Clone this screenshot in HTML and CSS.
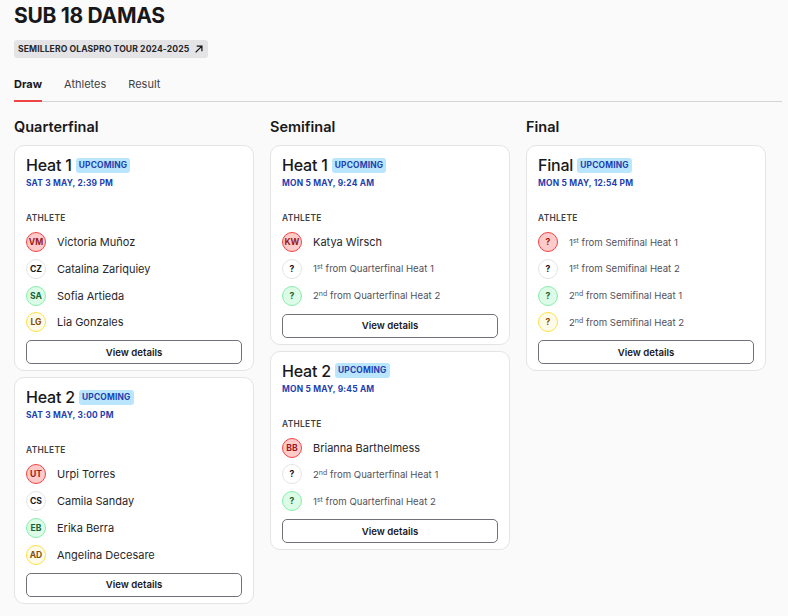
FILE: index.html
```html
<!DOCTYPE html>
<html lang="en">
<head>
<meta charset="utf-8">
<title>SUB 18 DAMAS</title>
<link rel="stylesheet" href="styles.css">
</head>
<body>
<div class="page">
  <h1 class="title">SUB 18 DAMAS</h1>
  <a class="tour">SEMILLERO OLASPRO TOUR 2024-2025
    <svg class="ext" viewBox="0 0 12 12" width="10" height="10"><path d="M2.5 9.5 L9.5 2.5 M4 2.5 H9.5 V8" fill="none" stroke="#111" stroke-width="1.5" stroke-linecap="square"/></svg>
  </a>
  <nav class="tabs">
    <span class="tab active">Draw</span>
    <span class="tab">Athletes</span>
    <span class="tab">Result</span>
  </nav>

  <div class="rounds">
    <section class="round">
      <h2 class="round-title">Quarterfinal</h2>
      <div class="card">
        <div class="head"><span class="name">Heat 1</span><span class="badge">UPCOMING</span></div>
        <div class="date">SAT 3 MAY, 2:39 PM</div>
        <div class="label">ATHLETE</div>
        <ul class="list">
          <li><span class="av red">VM</span><span class="ath">Victoria Muñoz</span></li>
          <li><span class="av white">CZ</span><span class="ath">Catalina Zariquiey</span></li>
          <li><span class="av green">SA</span><span class="ath">Sofia Artieda</span></li>
          <li><span class="av yellow">LG</span><span class="ath">Lia Gonzales</span></li>
        </ul>
        <button class="btn">View details</button>
      </div>
      <div class="card">
        <div class="head"><span class="name">Heat 2</span><span class="badge">UPCOMING</span></div>
        <div class="date">SAT 3 MAY, 3:00 PM</div>
        <div class="label">ATHLETE</div>
        <ul class="list">
          <li><span class="av red">UT</span><span class="ath">Urpi Torres</span></li>
          <li><span class="av white">CS</span><span class="ath">Camila Sanday</span></li>
          <li><span class="av green">EB</span><span class="ath">Erika Berra</span></li>
          <li><span class="av yellow">AD</span><span class="ath">Angelina Decesare</span></li>
        </ul>
        <button class="btn">View details</button>
      </div>
    </section>

    <section class="round">
      <h2 class="round-title">Semifinal</h2>
      <div class="card">
        <div class="head"><span class="name">Heat 1</span><span class="badge">UPCOMING</span></div>
        <div class="date">MON 5 MAY, 9:24 AM</div>
        <div class="label">ATHLETE</div>
        <ul class="list">
          <li><span class="av red">KW</span><span class="ath">Katya Wirsch</span></li>
          <li><span class="av white">?</span><span class="ph">1<sup>st</sup> from Quarterfinal Heat 1</span></li>
          <li><span class="av green">?</span><span class="ph">2<sup>nd</sup> from Quarterfinal Heat 2</span></li>
        </ul>
        <button class="btn">View details</button>
      </div>
      <div class="card">
        <div class="head"><span class="name">Heat 2</span><span class="badge">UPCOMING</span></div>
        <div class="date">MON 5 MAY, 9:45 AM</div>
        <div class="label">ATHLETE</div>
        <ul class="list">
          <li><span class="av red">BB</span><span class="ath">Brianna Barthelmess</span></li>
          <li><span class="av white">?</span><span class="ph">2<sup>nd</sup> from Quarterfinal Heat 1</span></li>
          <li><span class="av green">?</span><span class="ph">1<sup>st</sup> from Quarterfinal Heat 2</span></li>
        </ul>
        <button class="btn">View details</button>
      </div>
    </section>

    <section class="round">
      <h2 class="round-title">Final</h2>
      <div class="card">
        <div class="head"><span class="name">Final</span><span class="badge">UPCOMING</span></div>
        <div class="date">MON 5 MAY, 12:54 PM</div>
        <div class="label">ATHLETE</div>
        <ul class="list">
          <li><span class="av red">?</span><span class="ph">1<sup>st</sup> from Semifinal Heat 1</span></li>
          <li><span class="av white">?</span><span class="ph">1<sup>st</sup> from Semifinal Heat 2</span></li>
          <li><span class="av green">?</span><span class="ph">2<sup>nd</sup> from Semifinal Heat 1</span></li>
          <li><span class="av yellow">?</span><span class="ph">2<sup>nd</sup> from Semifinal Heat 2</span></li>
        </ul>
        <button class="btn">View details</button>
      </div>
    </section>
  </div>
</div>
</body>
</html>
```

FILE: styles.css
```css
* { box-sizing: border-box; }
html, body { margin: 0; padding: 0; background: #fafafa; }
body {
  font-family: Inter, "Noto Sans", "Liberation Sans", sans-serif;
  color: #18181b;
}
.page { width: 768px; margin-left: 14px; padding-top: 3px; }
.title {
  margin: 0;
  font-size: 21px;
  line-height: 26px;
  font-weight: 700;
  letter-spacing: -0.3px;
}
.tour {
  display: inline-flex;
  align-items: center;
  gap: 5px;
  margin-top: 11px;
  background: #e4e4e7;
  border-radius: 3px;
  padding: 0 4px;
  height: 18px;
  font-size: 8.6px;
  font-weight: 700;
  color: #27272a;
  letter-spacing: 0.1px;
}
.ext { display: block; }
.tabs {
  display: flex;
  gap: 22px;
  margin-top: 18px;
  border-bottom: 1px solid #d4d4d8;
}
.tab {
  font-size: 11px;
  line-height: 14px;
  padding: 1px 0 9px;
  color: #3f3f46;
  border-bottom: 2px solid transparent;
  margin-bottom: -1px;
}
.tab.active {
  font-weight: 700;
  color: #18181b;
  border-bottom-color: #ef4444;
}
.rounds {
  display: grid;
  grid-template-columns: repeat(3, 240px);
  column-gap: 16px;
  align-items: start;
  margin-top: 16px;
}
.round-title {
  margin: 0 0 9px;
  font-size: 14.5px;
  line-height: 18px;
  font-weight: 600;
}
.card {
  background: #fff;
  border: 1px solid #e4e4e7;
  border-radius: 10px;
  padding: 9px 11px 6px;
  margin-bottom: 6px;
}
.head { display: flex; align-items: center; gap: 4px; height: 20px; }
.name { font-size: 16px; font-weight: 500; letter-spacing: -0.2px; }
.badge {
  background: #bae6fd;
  color: #1e40af;
  font-size: 8.4px;
  font-weight: 700;
  border-radius: 3px;
  padding: 0 3px;
  height: 15px;
  line-height: 15px;
  letter-spacing: 0.2px;
}
.date {
  margin-top: 2px;
  font-size: 8.4px;
  line-height: 13px;
  font-weight: 700;
  color: #1e40af;
  letter-spacing: 0.2px;
}
.label {
  margin-top: 22px;
  font-size: 8.4px;
  line-height: 12px;
  font-weight: 600;
  color: #3f3f46;
  letter-spacing: 0.3px;
}
.list {
  list-style: none;
  margin: 8px 0 0;
  padding: 0;
  display: flex;
  flex-direction: column;
  gap: 6.8px;
}
.list li { display: flex; align-items: center; gap: 11px; height: 20px; }
.av {
  flex: none;
  width: 20px;
  height: 20px;
  border-radius: 50%;
  display: flex;
  align-items: center;
  justify-content: center;
  font-size: 8.6px;
  font-weight: 700;
  border: 1px solid;
}
.av.red { background: #fecaca; border-color: #ef4444; color: #991b1b; }
.av.white { background: #fff; border-color: #e4e4e7; color: #18181b; }
.av.green { background: #dcfce7; border-color: #86efac; color: #166534; }
.av.yellow { background: #fefce8; border-color: #fde047; color: #854d0e; }
.ath { font-size: 11px; color: #27272a; }
.ph { font-size: 9.6px; color: #52525b; }
.ph sup { font-size: 7px; line-height: 0; vertical-align: 3px; }
.btn {
  display: block;
  width: 100%;
  margin-top: 8px;
  height: 24px;
  background: #fff;
  border: 1px solid #71717a;
  border-radius: 5px;
  font-family: inherit;
  font-size: 9.6px;
  font-weight: 600;
  color: #18181b;
}
```
